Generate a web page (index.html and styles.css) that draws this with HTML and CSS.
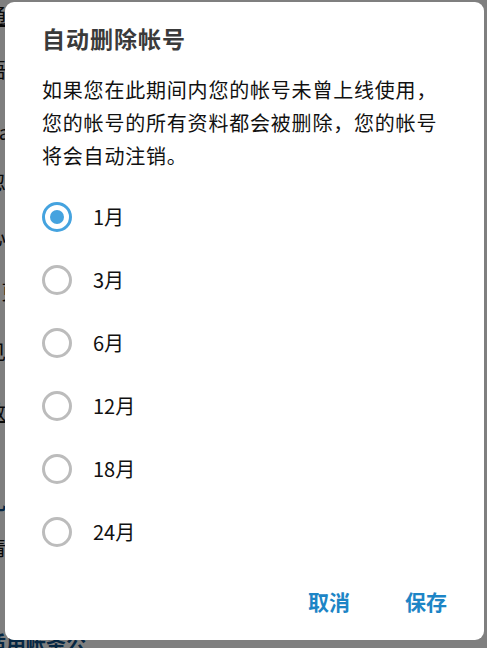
FILE: index.html
```html
<!DOCTYPE html>
<html lang="zh-CN">
<head>
<meta charset="utf-8">
<link rel="stylesheet" href="styles.css">
</head>
<body>
<div class="page">
  <div class="page-row r1 link">通知设置</div>
  <div class="page-row r2">语言</div>
  <div class="page-row r3">Aa 字体</div>
  <div class="page-row r4">忽略</div>
  <div class="page-row r5">心情</div>
  <div class="page-row r6">^ 更多</div>
  <div class="page-row r7">见过</div>
  <div class="page-row r8 link">数据</div>
  <div class="page-row r9 blue">礼物</div>
  <div class="page-row r10">清除</div>
  <div class="page-row r11 blue">适用帐条公</div>
</div>
<div class="overlay"></div>
<div class="dialog">
  <h1 class="title">自动删除帐号</h1>
  <p class="desc">如果您在此期间内您的帐号未曾上线使用，您的帐号的所有资料都会被删除，您的帐号将会自动注销。</p>
  <div class="options">
    <label class="option"><span class="radio checked"><span class="dot"></span></span><span class="label">1月</span></label>
    <label class="option"><span class="radio"></span><span class="label">3月</span></label>
    <label class="option"><span class="radio"></span><span class="label">6月</span></label>
    <label class="option"><span class="radio"></span><span class="label">12月</span></label>
    <label class="option"><span class="radio"></span><span class="label">18月</span></label>
    <label class="option"><span class="radio"></span><span class="label">24月</span></label>
  </div>
  <div class="actions">
    <span class="btn">取消</span>
    <span class="btn">保存</span>
  </div>
</div>
</body>
</html>
```

FILE: styles.css
```css
html, body {
  margin: 0;
  padding: 0;
  width: 487px;
  height: 648px;
  overflow: hidden;
  background: #ffffff;
  font-family: "Noto Sans CJK SC", "Noto Sans", sans-serif;
}

.page {
  display: flex;
  flex-direction: column;
  margin-left: -14px;
}

.page-row {
  font-size: 20px;
  line-height: 24px;
  color: #111;
  white-space: nowrap;
}
.page-row.link { text-decoration: underline; }
.page-row.blue { color: #0d4f86; font-weight: bold; }
.r1 { margin-top: 4px; }
.r2 { margin-top: 30px; }
.r3 { margin-top: 38px; }
.r4 { margin-top: 26px; }
.r5 { margin-top: 31px; }
.r6 { margin-top: 31px; }
.r7 { margin-top: 36px; }
.r8 { margin-top: 36px; }
.r9 { margin-top: 66px; }
.r10 { margin-top: 22px; }
.r11 { margin-top: 71px; }

.overlay {
  position: fixed;
  inset: 0;
  background: rgba(0, 0, 0, 0.5);
}

.dialog {
  position: fixed;
  left: 5px;
  top: 2px;
  width: 479px;
  height: 638px;
  box-sizing: border-box;
  background: #ffffff;
  border-radius: 9px;
  padding: 20px 37px 0 37px;
  display: flex;
  flex-direction: column;
}

.title {
  margin: 0;
  font-size: 23px;
  line-height: 32px;
  font-weight: bold;
  color: #3a3a3a;
  letter-spacing: 1px;
}

.desc {
  margin: 19px 0 0 0;
  font-size: 20px;
  line-height: 33px;
  color: #111;
  letter-spacing: 0.8px;
}

.options {
  margin-top: 13px;
  display: flex;
  flex-direction: column;
}

.option {
  height: 63px;
  display: flex;
  align-items: center;
}

.radio {
  width: 30px;
  height: 30px;
  box-sizing: border-box;
  border: 3px solid #bcbcbc;
  border-radius: 50%;
  display: flex;
  align-items: center;
  justify-content: center;
  flex: none;
}
.radio.checked { border-color: #45a3df; }
.dot {
  width: 14px;
  height: 14px;
  border-radius: 50%;
  background: #45a3df;
}

.label {
  margin-left: 21px;
  font-size: 20px;
  color: #111;
}

.actions {
  margin-top: 18px;
  display: flex;
  justify-content: flex-end;
  gap: 55px;
}

.btn {
  font-size: 21px;
  line-height: 40px;
  font-weight: bold;
  color: #1d85c6;
}
```
